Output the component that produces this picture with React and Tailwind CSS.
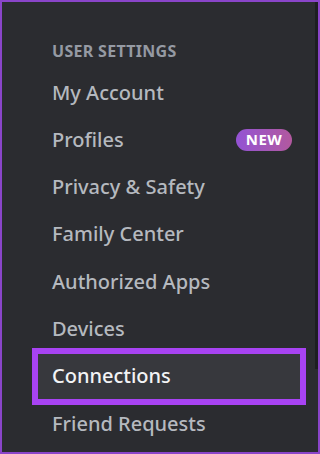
export default function App() {
  const items = [
    "My Account",
    "Profiles",
    "Privacy & Safety",
    "Family Center",
    "Authorized Apps",
    "Devices",
    "Connections",
    "Friend Requests",
  ];
  return (
    <div
      className="w-[320px] h-[454px] overflow-hidden bg-[#8a45c9] p-[2px]"
      style={{ fontFamily: '"Noto Sans", "Open Sans", sans-serif' }}
    >
      <div className="relative w-full h-full bg-[#2b2c30] pl-[36px] pr-[18px] pt-[37px]">
        <div className="absolute right-0 top-0 w-[3px] h-[367px] bg-[#1d1e21]" />
        <div className="pl-[14px] h-[23px] flex items-center text-[16px] font-bold tracking-[0.3px] text-[#959aa3] leading-none">
          USER SETTINGS
        </div>
        <div className="mt-[8px] flex flex-col gap-[2.3px]">
          {items.map((t) => {
            const sel = t === "Connections";
            return (
              <div
                key={t}
                className={
                  sel
                    ? "h-[45px] flex items-center pl-[14px] pr-[8px] bg-[#37383d] outline-[6px] outline-solid outline-[#a843f3] text-[#f2f3f5] text-[20px] font-medium"
                    : "h-[45px] flex items-center pl-[14px] pr-[8px] text-[#b5b9bf] text-[20px] font-medium"
                }
              >
                <span className="flex-1">{t}</span>
                {t === "Profiles" && (
                  <span className="h-[22px] w-[56px] rounded-full bg-gradient-to-r from-[#9352d4] to-[#b2589e] text-white text-[15px] font-bold flex items-center justify-center tracking-[0.4px] leading-none">
                    NEW
                  </span>
                )}
              </div>
            );
          })}
        </div>
      </div>
    </div>
  );
}
